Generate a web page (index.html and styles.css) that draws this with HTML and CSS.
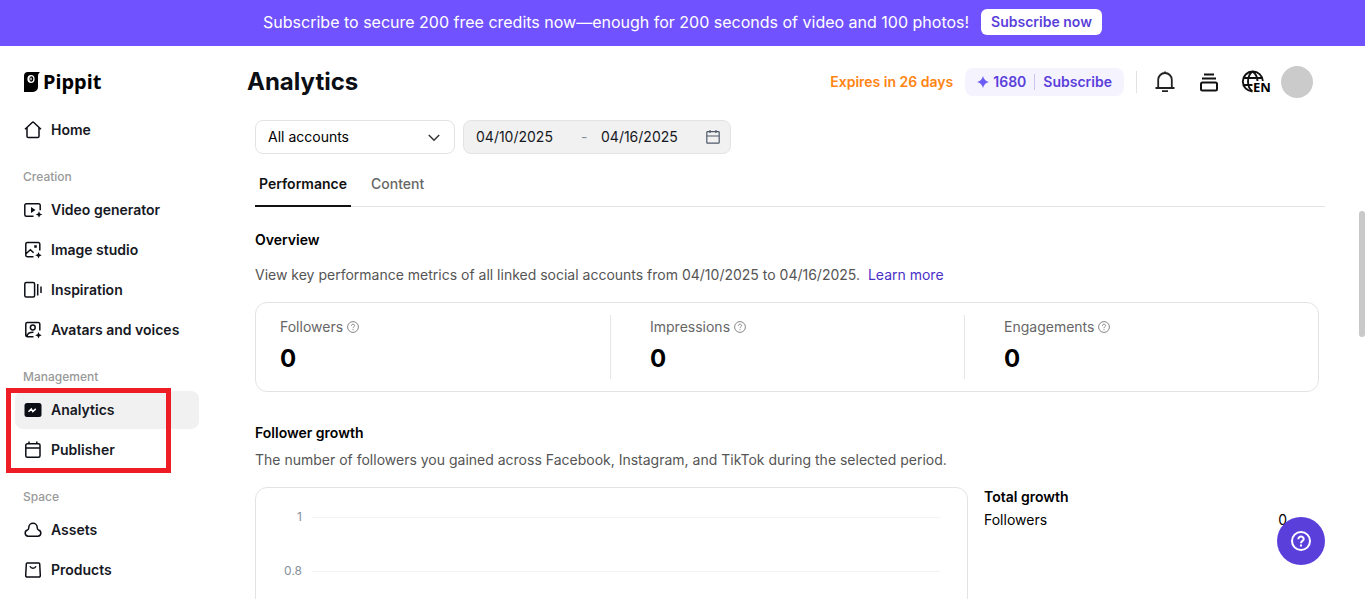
FILE: index.html
```html
<!DOCTYPE html>
<html lang="en">
<head>
<meta charset="utf-8">
<title>Pippit Analytics</title>
<link rel="stylesheet" href="styles.css">
</head>
<body>
<div class="banner">
  <span>Subscribe to secure 200 free credits now—enough for 200 seconds of video and 100 photos!</span>
  <button class="banner-button" type="button">Subscribe now</button>
</div>
<div class="shell">
  <aside class="sidebar">
    <a class="logo" href="#">
      <svg width="16" height="20" viewBox="0 0 16 20" aria-hidden="true"><path d="M4 0h12c-1 1-2 2-2 4v11a5 5 0 0 1-5 5H0V4a4 4 0 0 1 4-4z" fill="#000"/><ellipse cx="7" cy="7" rx="3.6" ry="4" fill="#fff"/><ellipse cx="7.4" cy="7" rx="1.900" ry="2.800" fill="#000"/><ellipse cx="7" cy="7" rx=".7" ry="1.400" fill="#fff"/></svg>
      <span>Pippit</span>
    </a>
    <nav class="nav">
      <a class="nav-item" href="#"><svg class="icon" viewBox="0 0 18 18"><path d="M1 8.3 8.2 1.5a1.2 1.2 0 0 1 1.6 0L17 8.3M3 6.8v8.4c0 .8.6 1.3 1.3 1.3h9.4c.8 0 1.3-.6 1.3-1.3V6.8"/></svg>Home</a>
      <h2 class="nav-label">Creation</h2>
      <a class="nav-item" href="#"><svg class="icon" viewBox="0 0 18 18"><path d="M9.5 15.2H2.3A1.5 1.5 0 0 1 .8 13.700V4.300A1.500 1.500 0 0 1 2.300 2.800h12.400a1.500 1.500 0 0 1 1.500 1.500v5"/><path class="fill" d="M7 6v6l4.500-3zM15 10.200l1 2.300 2.300 1-2.300 1-1 2.300-1-2.300-2.300-1 2.300-1z"/></svg>Video generator</a>
      <a class="nav-item" href="#"><svg class="icon" viewBox="0 0 18 18"><path d="M9.500 15.700H3.300a1.500 1.500 0 0 1-1.500-1.500V3a1.500 1.500 0 0 1 1.500-1.500h11A1.500 1.500 0 0 1 15.800 3v6.500M2 12.800l4.400-4 3.200 3"/><path class="fill" d="M10.200 4.300h2.600v2.400h-2.600zM14.500 11l1 2.300 2.300 1-2.300 1-1 2.300-1-2.300-2.300-1 2.300-1z"/></svg>Image studio</a>
      <a class="nav-item" href="#"><svg class="icon" viewBox="0 0 18 18"><rect x=".8" y="1.500" width="9.800" height="14.500" rx="1.500"/><path d="M13.700 3v11.500M17 5.500v6.500"/></svg>Inspiration</a>
      <a class="nav-item" href="#"><svg class="icon" viewBox="0 0 18 18"><path d="M9.500 15.700H3.300a1.500 1.500 0 0 1-1.500-1.500V3a1.500 1.500 0 0 1 1.500-1.500h11A1.500 1.500 0 0 1 15.800 3v6.500M3 15c.5-2.600 2.500-3.900 6.500-3.800"/><circle cx="8.800" cy="6.500" r="2.400"/><path class="fill" d="M14.500 11l1 2.300 2.300 1-2.300 1-1 2.300-1-2.300-2.300-1 2.300-1z"/></svg>Avatars and voices</a>
      <h2 class="nav-label">Management</h2>
      <a class="nav-item active" href="#" aria-current="page"><svg class="icon" viewBox="0 0 18 18"><rect class="fill" x=".5" y="2" width="17" height="14" rx="2.500"/><path class="light" d="m4.500 10.700 2.800-2.800 1.500 2.600 3-2.600"/></svg>Analytics</a>
      <a class="nav-item" href="#"><svg class="icon" viewBox="0 0 18 18"><rect x="1.800" y="2.800" width="14.200" height="13.500" rx="1.500"/><path d="M2 7h14M5 .5V3M12.800.5V3"/></svg>Publisher</a>
      <h2 class="nav-label">Space</h2>
      <a class="nav-item" href="#"><svg class="icon" viewBox="0 0 18 18"><path d="M4.200 15.200a3.200 3.200 0 0 1-.6-6.300c.8-.4 1.100-1.100 1.200-2.400a4.200 4.200 0 0 1 8.400 0c.1 1.300.4 2 1.200 2.400a3.200 3.200 0 0 1-.6 6.300z"/></svg>Assets</a>
      <a class="nav-item" href="#"><svg class="icon" viewBox="0 0 18 18"><path d="M3.300 2h11.400c.6 0 1 .4 1 1l.6 11.500a1.500 1.500 0 0 1-1.500 1.600H3.200a1.500 1.500 0 0 1-1.500-1.600L2.300 3c0-.6.400-1 1-1zM6 5.300c1.200 2.600 4.800 2.600 6 0"/></svg>Products</a>
    </nav>
    <div class="highlight"></div>
  </aside>
  <main class="main">
    <header class="header">
      <h1>Analytics</h1>
      <div class="header-tools">
        <span class="expires">Expires in 26 days</span>
        <div class="credits">
          <svg width="12" height="12" viewBox="0 0 12 12"><path d="M6 0c.8 3.200 2.800 5.200 6 6-3.200.8-5.200 2.800-6 6-.8-3.200-2.800-5.200-6-6 3.200-.8 5.200-2.800 6-6z" fill="#6a5cf5"/></svg>
          <span>1680</span>
          <a href="#">Subscribe</a>
        </div>
        <div class="tool-icons">
          <button type="button" aria-label="Notifications"><svg width="20" height="22" viewBox="0 0 20 22" fill="none" stroke="#222" stroke-width="1.800"><path d="M.5 17h19M3.200 17V8.800a6.800 6.800 0 0 1 13.600 0V17M7 20.200h6M10 .5V2"/></svg></button>
          <button type="button" aria-label="Tasks"><svg width="20" height="20" viewBox="0 0 20 20" fill="none" stroke="#111" stroke-width="2"><path d="M5 2.500h10M3 6.500h14"/><rect x="2" y="10.500" width="16" height="8" rx="1.500"/></svg></button>
          <button class="language" type="button" aria-label="Language EN"><svg width="28" height="24" viewBox="2 0 28 24" fill="none" stroke="#111" stroke-width="1.900"><path d="M11.500 21.500A10 10 0 1 1 21.800 11M11.500 21.500C5.500 17 5.500 6 11.500 1.500c3.500 2.500 5 6 5 9.500M2 8h19M2 15h9.500"/><text x="12" y="22" class="lang">EN</text></svg></button>
        </div>
        <div class="avatar"></div>
      </div>
    </header>
    <div class="content">
      <div class="filters">
        <div class="select-wrap">
          <select aria-label="Accounts"><option>All accounts</option></select>
          <svg width="12" height="8" viewBox="0 0 12 8" fill="none" stroke="#333" stroke-width="1.500"><path d="m.8 1 5.200 5.200L11.200 1"/></svg>
        </div>
        <div class="range">
          <input type="text" aria-label="Start date" value="04/10/2025">
          <span>-</span>
          <input type="text" aria-label="End date" value="04/16/2025">
          <svg width="14" height="14" viewBox="0 0 14 14" fill="none" stroke="#4e5969" stroke-width="1.200"><rect x=".8" y="1.700" width="12.400" height="11.500" rx=".8"/><path d="M1 6h12M4 0v3M10 0v3"/></svg>
        </div>
      </div>
      <div class="tabs" role="tablist">
        <button class="tab selected" role="tab" aria-selected="true" type="button">Performance</button>
        <button class="tab" role="tab" aria-selected="false" type="button">Content</button>
      </div>
      <section class="overview">
        <h2>Overview</h2>
        <p>View key performance metrics of all linked social accounts from 04/10/2025 to 04/16/2025. <a href="#">Learn more</a></p>
        <div class="stats">
          <div class="stat"><div class="stat-name">Followers <svg class="help" viewBox="0 0 12 12"><circle cx="6" cy="6" r="5.400"/><path d="M4.400 4.800c0-2.200 3.300-2 3.200-.1C7.600 5.900 6 5.800 6 7.200M6 8.200v1"/></svg></div><strong>0</strong></div>
          <div class="stat"><div class="stat-name">Impressions <svg class="help" viewBox="0 0 12 12"><circle cx="6" cy="6" r="5.400"/><path d="M4.400 4.800c0-2.200 3.300-2 3.200-.1C7.600 5.900 6 5.800 6 7.200M6 8.200v1"/></svg></div><strong>0</strong></div>
          <div class="stat"><div class="stat-name">Engagements <svg class="help" viewBox="0 0 12 12"><circle cx="6" cy="6" r="5.400"/><path d="M4.400 4.800c0-2.200 3.300-2 3.200-.1C7.600 5.900 6 5.800 6 7.200M6 8.200v1"/></svg></div><strong>0</strong></div>
        </div>
      </section>
      <section class="growth">
        <h2>Follower growth</h2>
        <p>The number of followers you gained across Facebook, Instagram, and TikTok during the selected period.</p>
        <div class="growth-body">
          <div class="chart">
            <div class="tick"><span>1</span></div>
            <div class="tick"><span>0.8</span></div>
          </div>
          <div class="total">
            <h3>Total growth</h3>
            <div class="total-row"><span>Followers</span><span>0</span></div>
          </div>
        </div>
      </section>
    </div>
  </main>
</div>
<div class="scroll-thumb"></div>
<button class="help-button" type="button" aria-label="Help"><svg width="20" height="20" viewBox="0 0 20 20" fill="none" stroke="#fff" stroke-width="2"><circle cx="10" cy="10" r="9"/><path d="M7.300 8.200c0-3.700 5.500-3.400 5.400-.2C12.700 10 10 9.800 10 12.200M10 13.600v2"/></svg></button>
</body>
</html>
```
FILE: styles.css
```css
* { box-sizing: border-box; }
body {
  margin: 0;
  height: 100vh;
  display: flex;
  flex-direction: column;
  overflow: hidden;
  background: #fff;
  color: #000;
  font: 14px/20px Inter, "Liberation Sans", sans-serif;
}
h1, h2, h3, p { margin: 0; }
a { color: inherit; text-decoration: none; }
button { border: 0; padding: 0; background: none; font: inherit; color: inherit; }
svg { display: block; flex: none; overflow: visible; }

.banner {
  flex: none;
  height: 46px;
  padding-bottom: 2px;
  display: flex;
  align-items: center;
  justify-content: center;
  gap: 12px;
  background: #7152ff;
  color: #fff;
  font-size: 16px;
}
.banner-button {
  height: 26px;
  padding: 0 10px;
  border-radius: 6px;
  background: #fff;
  color: #5b3fdb;
  font-size: 14px;
  font-weight: 600;
}
.shell { flex: 1; min-height: 0; display: flex; padding-bottom: 6px; overflow: hidden; }

.sidebar { position: relative; flex: none; width: 247px; padding-top: 16px; }
.logo {
  display: flex;
  align-items: center;
  gap: 3px;
  height: 40px;
  padding-left: 24px;
  font: 700 20px/24px "Noto Sans", sans-serif;
}
.nav { padding: 8px 48px 0 15px; }
.nav-item {
  display: flex;
  align-items: center;
  gap: 9px;
  height: 38px;
  margin: 1px 0 2px;
  padding-left: 9px;
  border-radius: 8px;
  color: #161823;
  font-weight: 600;
}
.nav-item + .nav-item { margin-top: 0; }
.nav-item.active { background: #f1f1f1; }
.nav-label {
  height: 39px;
  padding: 18px 0 0 8px;
  color: #999;
  font-size: 12px;
  line-height: 16px;
  font-weight: 500;
}
.icon { width: 18px; height: 18px; fill: none; stroke: #0c0e16; stroke-width: 1.5px; }
.icon .fill { fill: #0c0e16; stroke: none; }
.icon .light { stroke: #fff; }
.highlight {
  position: absolute;
  left: 6px;
  top: 342px;
  width: 165px;
  height: 85px;
  border: 5px solid #ee1c25;
}

.main { flex: 1; min-width: 0; overflow: hidden; }
.header {
  display: flex;
  align-items: center;
  justify-content: space-between;
  height: 72px;
  padding-right: 52px;
}
h1 { font-size: 24px; line-height: 32px; font-weight: 700; color: #0c0e16; }
.header-tools { display: flex; align-items: center; gap: 12px; font-weight: 600; }
.expires { color: #ff8412; }
.credits {
  display: flex;
  align-items: center;
  height: 28px;
  padding: 0 12px;
  border-radius: 8px;
  background: #f5f3fe;
  color: #5b3fdb;
}
.credits span { margin: 0 8px 0 4px; }
.credits a { padding-left: 8px; border-left: 1px solid #cbc3f2; line-height: 16px; }
.tool-icons {
  display: flex;
  align-items: center;
  gap: 24px;
  height: 22px;
  padding-left: 18px;
  border-left: 1px solid #e2e2e2;
}
.tool-icons + .avatar { margin-left: -2px; }
.lang { fill: #000; stroke: none; font: 700 13px "Open Sans", sans-serif; }
.avatar { width: 32px; height: 32px; border-radius: 50%; background: #cbcbcb; }

.content { padding: 2px 40px 0 8px; }
.filters { display: flex; gap: 8px; }
.select-wrap { position: relative; width: 200px; }
.select-wrap select {
  appearance: none;
  width: 100%;
  height: 34px;
  padding: 0 12px;
  border: 1px solid #e3e3e3;
  border-radius: 8px;
  background: #fff;
  color: #000;
  font: inherit;
}
.select-wrap svg { position: absolute; right: 15px; top: 14px; pointer-events: none; }
.range {
  display: flex;
  align-items: center;
  width: 268px;
  height: 34px;
  padding: 0 10px 0 12px;
  border: 1px solid #e3e3e3;
  border-radius: 8px;
  background: #f1f1f1;
}
.range input { flex: 1; width: 0; padding: 0; border: 0; background: none; font: inherit; color: #161823; }
.range span { width: 20px; color: #86909c; }
.tabs { display: flex; gap: 16px; margin-top: 11px; border-bottom: 1px solid #e3e3e3; }
.tab {
  height: 42px;
  margin-bottom: -1px;
  padding: 0 4px 3px;
  border-bottom: 2px solid transparent;
  color: #666;
  font-weight: 500;
}
.tab.selected { border-color: #111; color: #111; font-weight: 600; }
.overview { padding: 23px 6px 0 0; }
h2, h3 { font-size: 14px; line-height: 20px; font-weight: 600; }
p { color: #555; }
.overview p { margin-top: 15px; }
.overview p a { margin-left: 4px; color: #4a2fc9; }
.stats {
  display: grid;
  grid-template-columns: 1fr 1fr 1fr;
  margin-top: 17px;
  padding: 12px 0;
  border: 1px solid #e3e3e3;
  border-radius: 12px;
}
.stat { height: 64px; padding: 2px 0 0 39px; border-left: 1px solid #e6e6e6; }
.stat:first-child { padding-left: 24px; border-left: 0; }
.stat-name { display: flex; align-items: center; gap: 4px; color: #666; }
.stat strong { display: block; margin-top: 6px; font-size: 24px; line-height: 32px; font-weight: 700; }
.help { width: 12px; height: 12px; fill: none; stroke: #888; stroke-width: 1px; }
.growth { padding-top: 31px; }
.growth p { margin-top: 7px; }
.growth-body { display: grid; grid-template-columns: minmax(0, 1fr) 341px; gap: 16px; margin-top: 17px; }
.chart {
  height: 300px;
  padding: 2px 27px 0 28px;
  border: 1px solid #e3e3e3;
  border-radius: 12px;
}
.tick { display: flex; align-items: center; gap: 10px; height: 54px; color: #86909c; font-size: 12px; }
.tick span { width: 18px; text-align: right; }
.tick::after { content: ""; flex: 1; height: 1px; background: #f2f3f5; }
.total { padding-right: 38px; }
.total-row { display: flex; justify-content: space-between; margin-top: 3px; }

.scroll-thumb {
  position: fixed;
  right: 0;
  top: 211px;
  width: 6px;
  height: 126px;
  border-radius: 3px;
  background: #c9c9c9;
}
.help-button {
  position: fixed;
  right: 40px;
  bottom: 40px;
  width: 48px;
  height: 48px;
  display: flex;
  align-items: center;
  justify-content: center;
  border-radius: 50%;
  background: #5b3fdb;
}
```
